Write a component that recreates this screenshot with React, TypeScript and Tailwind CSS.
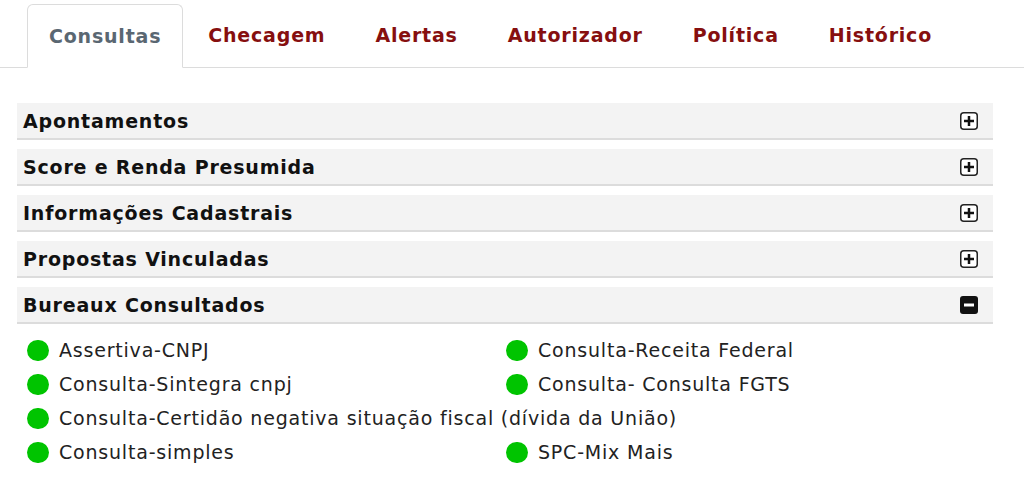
import React from 'react';

const tabs = ['Consultas', 'Checagem', 'Alertas', 'Autorizador', 'Política', 'Histórico'];

const sections = [
  { title: 'Apontamentos', open: false },
  { title: 'Score e Renda Presumida', open: false },
  { title: 'Informações Cadastrais', open: false },
  { title: 'Propostas Vinculadas', open: false },
  { title: 'Bureaux Consultados', open: true },
];

const bureaux = [
  ['Assertiva-CNPJ', 'Consulta-Receita Federal'],
  ['Consulta-Sintegra cnpj', 'Consulta- Consulta FGTS'],
  ['Consulta-Certidão negativa situação fiscal (dívida da União)', ''],
  ['Consulta-simples', 'SPC-Mix Mais'],
];

function ToggleIcon({ open }: { open: boolean }) {
  if (open) {
    return (
      <svg width="20" height="20" viewBox="0 0 20 20">
        <rect x="1" y="1" width="18" height="18" rx="3" fill="#111" />
        <rect x="5" y="8.5" width="10" height="3" fill="#fff" />
      </svg>
    );
  }
  return (
    <svg width="20" height="20" viewBox="0 0 20 20">
      <rect x="1.75" y="1.75" width="16.5" height="16.5" rx="3" fill="#fff" stroke="#222" strokeWidth="1.5" />
      <rect x="5" y="8.75" width="10" height="2.5" fill="#111" />
      <rect x="8.75" y="5" width="2.5" height="10" fill="#111" />
    </svg>
  );
}

function Bureau({ name }: { name: string }) {
  if (!name) return <div />;
  return (
    <div className="flex items-center gap-[10px] h-[34px] whitespace-nowrap">
      <span className="w-[22px] h-[21px] rounded-full bg-[#00c400] shrink-0" />
      <span className="text-[19px] tracking-[0.8px] text-[#222]">{name}</span>
    </div>
  );
}

export default function App() {
  return (
    <div className="w-[1024px] h-[481px] bg-white overflow-hidden font-['DejaVu_Sans',Verdana,sans-serif]">
      <div className="flex h-[68px] pt-1 pl-[27px] border-b border-[#dcdcdc]">
        {tabs.map((t, i) => (
          <div
            key={t}
            className={
              i === 0
                ? 'flex items-center px-[21px] -mb-px bg-white border border-[#dcdcdc] border-b-white rounded-t-[6px] text-[#5a6772] text-[19px] tracking-[0.8px] font-bold'
                : 'flex items-center px-[25px] text-[#860f0f] text-[19px] tracking-[0.8px] font-bold'
            }
          >
            {t}
          </div>
        ))}
      </div>

      <div className="flex flex-col gap-[9px] pl-[17px] pr-[31px] pt-[35px]">
        {sections.map((s) => (
          <div key={s.title}>
            <div className="flex items-center justify-between h-[37px] bg-[#f3f3f3] border-b-2 border-[#dcdcdc] pl-[6px] pr-[14px]">
              <span className="text-[19px] tracking-[0.8px] font-bold text-[#111] pt-px">{s.title}</span>
              <ToggleIcon open={s.open} />
            </div>
            {s.open && (
              <div className="grid grid-cols-[479px_1fr] pt-[9px] pl-[10px]">
                {bureaux.map(([a, b]) => (
                  <React.Fragment key={a}>
                    <Bureau name={a} />
                    <Bureau name={b} />
                  </React.Fragment>
                ))}
              </div>
            )}
          </div>
        ))}
      </div>
    </div>
  );
}
